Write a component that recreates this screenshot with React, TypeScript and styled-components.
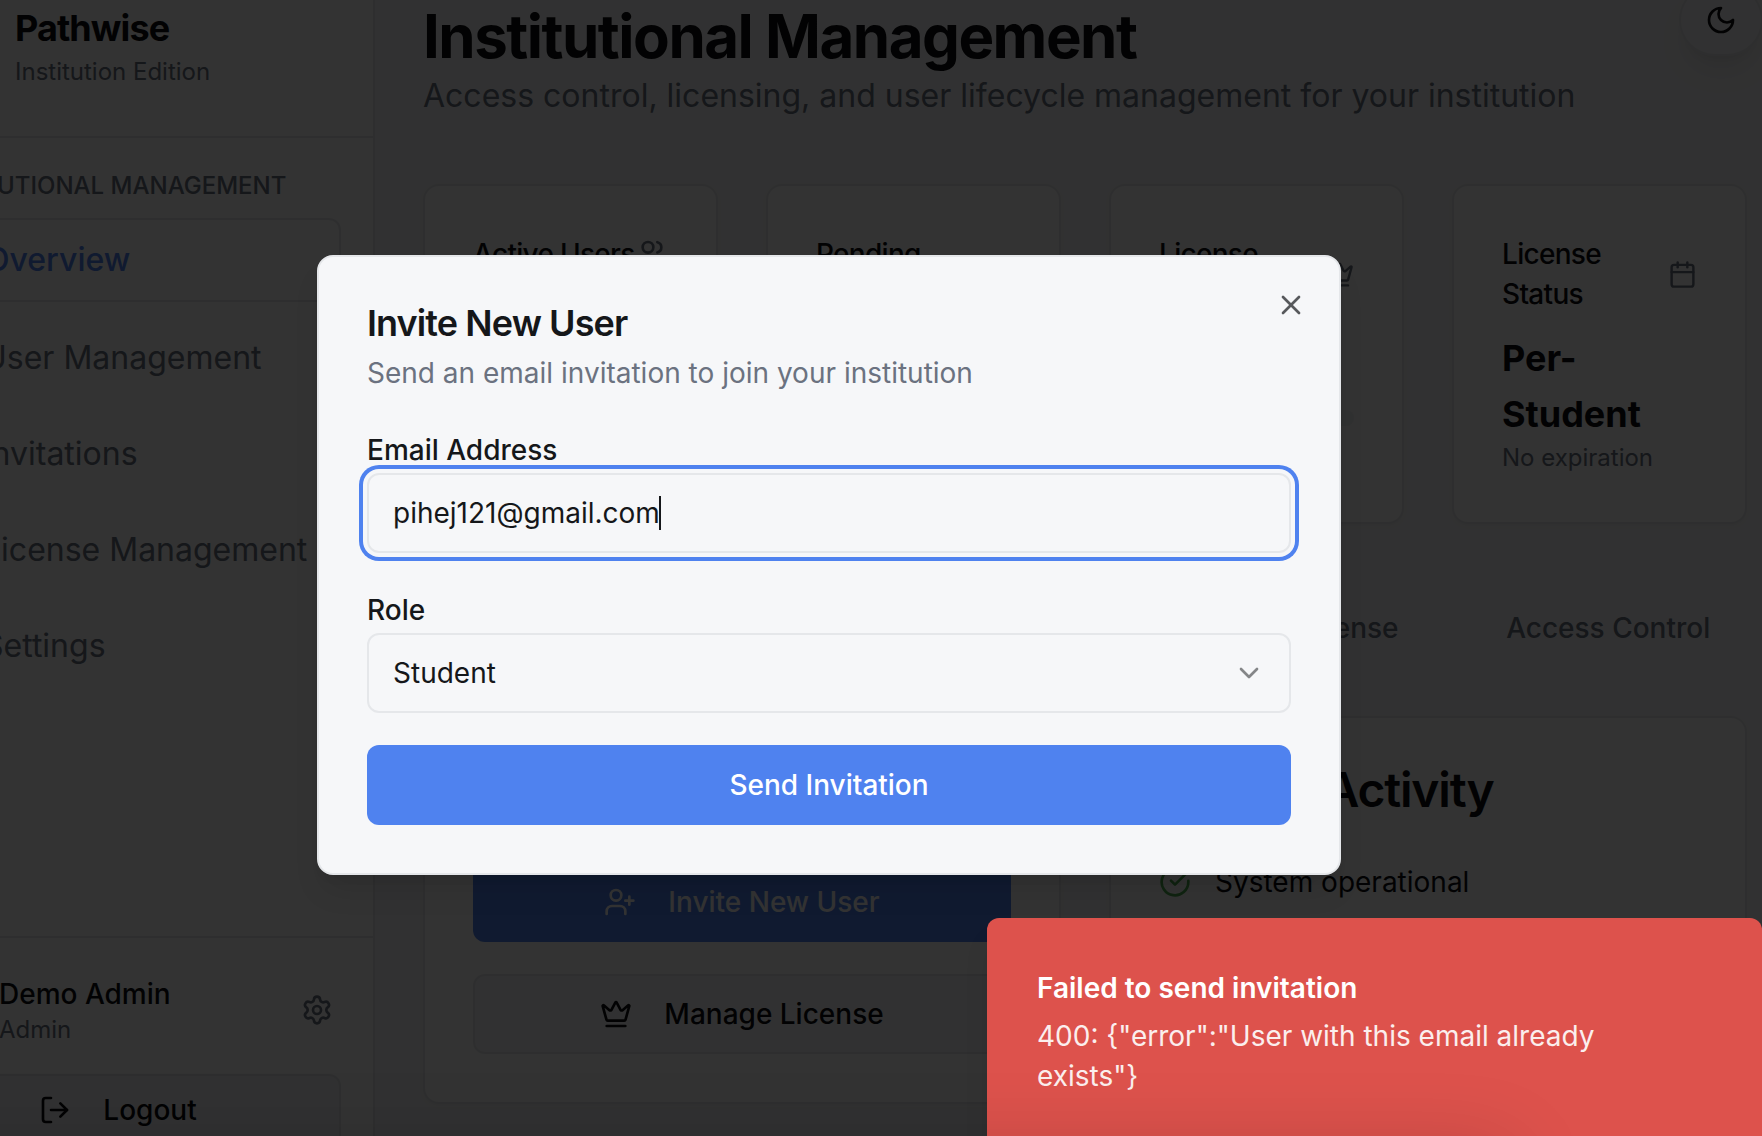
import React from "react";
import styled, { createGlobalStyle, css } from "styled-components";
import {
  Building2,
  Calendar,
  ChevronDown,
  Crown,
  Key,
  LayoutDashboard,
  LogOut,
  Mail,
  Settings,
  SlidersHorizontal,
  UserPlus,
  Users,
  X,
} from "lucide-react";

const color = {
  background: "#f6f7f9",
  page: "#f6f6f7",
  surface: "#fdfdfd",
  foreground: "#15171a",
  heading: "#0c0d10",
  muted: "#6b7280",
  border: "#e5e7ea",
  primary: "#4f82ef",
  danger: "#dd524c",
  success: "#4cae50",
};

const GlobalStyle = createGlobalStyle`
  *, *::before, *::after { box-sizing: border-box; }
  body {
    margin: 0;
    font-family: Inter, "Liberation Sans", sans-serif;
    font-size: 32px;
    line-height: 48px;
    color: ${color.heading};
    background: ${color.page};
    overflow: hidden;
  }
  h1, h2, h3, p { margin: 0; }
  button { font: inherit; color: inherit; }
`;

const Screen = styled.div`
  position: relative;
  display: flex;
  width: 1762px;
  height: 1136px;
  overflow: hidden;
`;

/* Sidebar */

const Sidebar = styled.aside`
  display: flex;
  flex-direction: column;
  flex: none;
  width: 512px;
  margin-left: -137px;
  background: ${color.surface};
  border-right: 2px solid ${color.border};
`;

const Brand = styled.div`
  display: flex;
  align-items: center;
  gap: 24px;
  padding: 0 48px 48px;
  border-bottom: 2px solid ${color.border};
`;

const Tile = styled.div<{ $round?: boolean }>`
  display: grid;
  place-items: center;
  width: 80px;
  height: 80px;
  border-radius: ${(p) => (p.$round ? "50%" : "16px")};
  background: ${color.primary};
  color: #fff;
  font-size: 28px;
`;

const BrandName = styled.div`
  font-size: 36px;
  line-height: 56px;
  font-weight: 700;
  letter-spacing: -0.025em;
`;

const Caption = styled.div`
  font-size: 24px;
  line-height: 32px;
  color: ${color.muted};
`;

const Nav = styled.nav`
  flex: 1;
  display: flex;
  flex-direction: column;
  padding: 32px;
`;

const NavLabel = styled.div`
  margin-bottom: 16px;
  padding: 0 24px;
  font-size: 24px;
  line-height: 32px;
  font-weight: 500;
  color: ${color.muted};
`;

const NavList = styled.div`
  display: flex;
  flex-direction: column;
  gap: 16px;
`;

const NavItem = styled.a<{ $active?: boolean }>`
  display: flex;
  align-items: center;
  gap: 24px;
  padding: 16px 24px;
  color: ${color.muted};
  white-space: nowrap;
  ${(p) =>
    p.$active &&
    css`
      border: 2px solid ${color.border};
      border-radius: 12px;
      color: ${color.primary};
      font-weight: 500;
    `}
`;

const SidebarFooter = styled.div`
  display: flex;
  flex-direction: column;
  gap: 24px;
  height: 200px;
  padding: 32px;
  border-top: 2px solid ${color.border};
`;

const Account = styled.div`
  display: flex;
  align-items: center;
  gap: 24px;
  padding-right: 8px;
`;

const AccountText = styled.div`
  flex: 1;
`;

const AccountName = styled.div`
  font-size: 28px;
  line-height: 40px;
  font-weight: 500;
`;

const MutedIcon = styled.span`
  display: flex;
  min-width: 0;
  color: ${color.muted};
`;

/* Buttons */

const Button = styled.button<{ $kind?: "primary" | "outline"; $small?: boolean }>`
  display: flex;
  flex: none;
  align-items: center;
  justify-content: center;
  gap: 32px;
  width: 100%;
  height: ${(p) => (p.$small ? "72px" : "80px")};
  padding: 0 32px;
  border-radius: 12px;
  font-size: 28px;
  line-height: 40px;
  font-weight: 500;
  ${(p) =>
    p.$kind === "outline"
      ? css`
          border: 2px solid ${color.border};
          background: ${color.page};
        `
      : css`
          border: 0;
          background: ${color.primary};
          color: #fff;
        `}
`;

/* Main column */

const Main = styled.main`
  flex: none;
  width: 1419px;
  padding: 0 47px 0 48px;
`;

const PageTitle = styled.h1`
  font-size: 60px;
  line-height: 72px;
  font-weight: 700;
  letter-spacing: -0.025em;
`;

const PageSubtitle = styled.p`
  margin-bottom: 64px;
  color: ${color.muted};
`;

const StatGrid = styled.div`
  display: grid;
  grid-template-columns: repeat(4, 1fr);
  gap: 48px;
  margin-bottom: 64px;
`;

const Card = styled.section`
  min-width: 0;
  padding: 48px;
  border: 2px solid ${color.border};
  border-radius: 16px;
  background: ${color.surface};
  box-shadow: 0 2px 4px rgba(0, 0, 0, 0.04);
`;

const StatHeader = styled.div`
  display: flex;
  align-items: center;
  justify-content: space-between;
  margin-bottom: 16px;
`;

const StatTitle = styled.h3<{ $twoLine?: boolean }>`
  width: ${(p) => (p.$twoLine ? "120px" : "auto")};
  white-space: ${(p) => (p.$twoLine ? "normal" : "nowrap")};
  font-size: 28px;
  line-height: 40px;
  font-weight: 500;
  letter-spacing: -0.025em;
`;

const StatValue = styled.div`
  width: 150px;
  font-size: 36px;
  line-height: 56px;
  font-weight: 700;
`;

const Meter = styled.div`
  height: 16px;
  margin-top: 24px;
  border-radius: 8px;
  background: #f1f2f4;
`;

const Tabs = styled.div`
  display: grid;
  grid-template-columns: repeat(5, 1fr);
  height: 80px;
  margin-bottom: 48px;
  padding: 8px;
  border-radius: 12px;
`;

const Tab = styled.button`
  padding: 0;
  border: 0;
  background: none;
  font-size: 28px;
  line-height: 40px;
  font-weight: 500;
  color: ${color.muted};
`;

const PanelGrid = styled.div`
  display: grid;
  grid-template-columns: 1fr 1fr;
  gap: 48px;
`;

const PanelTitle = styled.h2`
  margin-bottom: 48px;
  font-size: 48px;
  line-height: 48px;
  font-weight: 600;
  letter-spacing: -0.025em;
`;

const Stack = styled.div`
  display: flex;
  flex-direction: column;
  gap: 32px;
`;

const StatusRow = styled.div`
  display: flex;
  align-items: center;
  gap: 24px;
  font-size: 28px;
  line-height: 40px;
`;

const ThemeToggle = styled.button`
  position: absolute;
  top: -16px;
  right: -1px;
  display: grid;
  place-items: center;
  width: 84px;
  height: 72px;
  padding: 0;
  border: 2px solid ${color.border};
  border-radius: 36px;
  background: ${color.page};
  box-shadow: 0 20px 30px -6px rgba(0, 0, 0, 0.08), 0 8px 12px -8px rgba(0, 0, 0, 0.08);
`;

/* Dialog and toast */

const Backdrop = styled.div`
  position: absolute;
  inset: 0;
  background: rgba(0, 0, 0, 0.8);
`;

const Dialog = styled.div`
  position: absolute;
  top: 255px;
  left: 317px;
  display: flex;
  flex-direction: column;
  gap: 32px;
  width: 1024px;
  padding: 48px;
  border: 2px solid ${color.border};
  border-radius: 16px;
  background: ${color.background};
  color: ${color.foreground};
  box-shadow: 0 20px 30px -6px rgba(0, 0, 0, 0.1), 0 8px 12px -8px rgba(0, 0, 0, 0.1);
`;

const DialogTitle = styled.h2`
  margin-bottom: 12px;
  font-size: 36px;
  line-height: 36px;
  font-weight: 600;
  letter-spacing: -0.025em;
`;

const DialogText = styled.p`
  font-size: 28px;
  line-height: 40px;
  color: ${color.muted};
`;

const CloseButton = styled.button`
  position: absolute;
  top: 32px;
  right: 32px;
  display: flex;
  padding: 0;
  border: 0;
  background: none;
  opacity: 0.7;
`;

const FieldLabel = styled.div`
  height: 48px;

  label {
    font-size: 28px;
    line-height: 28px;
    font-weight: 500;
  }
`;

const Control = styled.div<{ $focused?: boolean }>`
  display: flex;
  align-items: center;
  height: 80px;
  padding: 0 24px;
  border: 2px solid ${color.border};
  border-radius: 12px;
  background: ${color.background};
  font-size: 28px;
  line-height: 40px;
  ${(p) =>
    p.$focused &&
    css`
      box-shadow: 0 0 0 4px ${color.background}, 0 0 0 8px ${color.primary};
    `}
`;

const Caret = styled.span`
  width: 2px;
  height: 34px;
  margin-left: -1px;
  background: ${color.foreground};
`;

const SelectArrow = styled.span`
  display: flex;
  margin-left: auto;
  opacity: 0.5;
`;

const Toast = styled.div`
  position: absolute;
  top: 918px;
  right: 0;
  display: flex;
  flex-direction: column;
  gap: 8px;
  width: 775px;
  height: 260px;
  padding: 50px 100px 50px 50px;
  border-radius: 12px;
  background: ${color.danger};
  color: #fff;
  font-size: 28px;
  line-height: 40px;
  box-shadow: 0 20px 30px -6px rgba(0, 0, 0, 0.1);
`;

const ToastTitle = styled.div`
  font-weight: 600;
`;

const ToastText = styled.div`
  opacity: 0.9;
`;

const BottomShade = styled.div`
  position: absolute;
  top: 1150px;
  left: -100px;
  width: 1610px;
  height: 80px;
  box-shadow: 0 0 80px rgba(0, 0, 0, 0.17);
  pointer-events: none;
`;

const MoonIcon = () => (
  <svg width="32" height="32" viewBox="0 0 24 24" fill="none" stroke="currentColor" strokeWidth="2" strokeLinecap="round" strokeLinejoin="round">
    <path d="M12 3a6 6 0 0 0 9 9 9 9 0 1 1-9-9Z" />
  </svg>
);

const CheckIcon = () => (
  <svg width="32" height="32" viewBox="0 0 24 24" fill="none" stroke={color.success} strokeWidth="2" strokeLinecap="round" strokeLinejoin="round">
    <path d="M22 11.08V12a10 10 0 1 1-5.93-9.14" />
    <path d="m9 11 3 3L22 4" />
  </svg>
);

const navItems = [
  { label: "Overview", Icon: LayoutDashboard, active: true },
  { label: "User Management", Icon: Users },
  { label: "Invitations", Icon: Mail },
  { label: "License Management", Icon: Key },
  { label: "Settings", Icon: SlidersHorizontal },
];

const tabs = ["Overview", "Users", "Invitations", "License", "Access Control"];

export default function App() {
  return (
    <>
      <GlobalStyle />
      <Screen>
        <Sidebar>
          <Brand>
            <Tile>
              <Building2 size={40} />
            </Tile>
            <div>
              <BrandName>Pathwise</BrandName>
              <Caption>Institution Edition</Caption>
            </div>
          </Brand>
          <Nav>
            <NavLabel>INSTITUTIONAL MANAGEMENT</NavLabel>
            <NavList>
              {navItems.map(({ label, Icon, active }) => (
                <NavItem key={label} $active={active}>
                  <Icon size={40} />
                  {label}
                </NavItem>
              ))}
            </NavList>
          </Nav>
          <SidebarFooter>
            <Account>
              <Tile $round>DA</Tile>
              <AccountText>
                <AccountName>Demo Admin</AccountName>
                <Caption>Admin</Caption>
              </AccountText>
              <MutedIcon>
                <Settings size={32} />
              </MutedIcon>
            </Account>
            <Button $kind="outline" $small>
              <LogOut size={32} />
              Logout
            </Button>
          </SidebarFooter>
        </Sidebar>

        <Main>
          <PageTitle>Institutional Management</PageTitle>
          <PageSubtitle>
            Access control, licensing, and user lifecycle management for your institution
          </PageSubtitle>

          <StatGrid>
            <Card>
              <StatHeader>
                <StatTitle>Active Users</StatTitle>
                <MutedIcon>
                  <Users size={32} />
                </MutedIcon>
              </StatHeader>
              <StatValue>1</StatValue>
            </Card>
            <Card>
              <StatHeader>
                <StatTitle $twoLine>Pending Invites</StatTitle>
                <MutedIcon>
                  <Mail size={29} />
                </MutedIcon>
              </StatHeader>
              <StatValue>0</StatValue>
            </Card>
            <Card>
              <StatHeader>
                <StatTitle $twoLine>License Usage</StatTitle>
                <MutedIcon>
                  <Crown size={29} />
                </MutedIcon>
              </StatHeader>
              <StatValue>1/100</StatValue>
              <Meter />
            </Card>
            <Card>
              <StatHeader>
                <StatTitle $twoLine>License Status</StatTitle>
                <MutedIcon>
                  <Calendar size={29} />
                </MutedIcon>
              </StatHeader>
              <StatValue>Per-Student</StatValue>
              <Caption>No expiration</Caption>
            </Card>
          </StatGrid>

          <Tabs>
            {tabs.map((label) => (
              <Tab key={label}>{label}</Tab>
            ))}
          </Tabs>

          <PanelGrid>
            <Card>
              <PanelTitle>Quick Actions</PanelTitle>
              <Stack>
                <Button>
                  <UserPlus size={32} />
                  Invite New User
                </Button>
                <Button $kind="outline">
                  <Crown size={32} />
                  Manage License
                </Button>
              </Stack>
            </Card>
            <Card>
              <PanelTitle>Recent Activity</PanelTitle>
              <StatusRow>
                <CheckIcon />
                System operational
              </StatusRow>
            </Card>
          </PanelGrid>
        </Main>

        <ThemeToggle aria-label="Toggle theme">
          <MoonIcon />
        </ThemeToggle>

        <Backdrop />

        <Dialog role="dialog">
          <div>
            <DialogTitle>Invite New User</DialogTitle>
            <DialogText>Send an email invitation to join your institution</DialogText>
          </div>
          <div>
            <FieldLabel>
              <label>Email Address</label>
            </FieldLabel>
            <Control $focused>
              pihej121@gmail.com
              <Caret />
            </Control>
          </div>
          <div>
            <FieldLabel>
              <label>Role</label>
            </FieldLabel>
            <Control>
              Student
              <SelectArrow>
                <ChevronDown size={32} />
              </SelectArrow>
            </Control>
          </div>
          <Button>Send Invitation</Button>
          <CloseButton aria-label="Close">
            <X size={32} />
          </CloseButton>
        </Dialog>

        <Toast role="alert">
          <ToastTitle>Failed to send invitation</ToastTitle>
          <ToastText>400: {'{"error":"User with this email already exists"}'}</ToastText>
        </Toast>
        <BottomShade />
      </Screen>
    </>
  );
}
